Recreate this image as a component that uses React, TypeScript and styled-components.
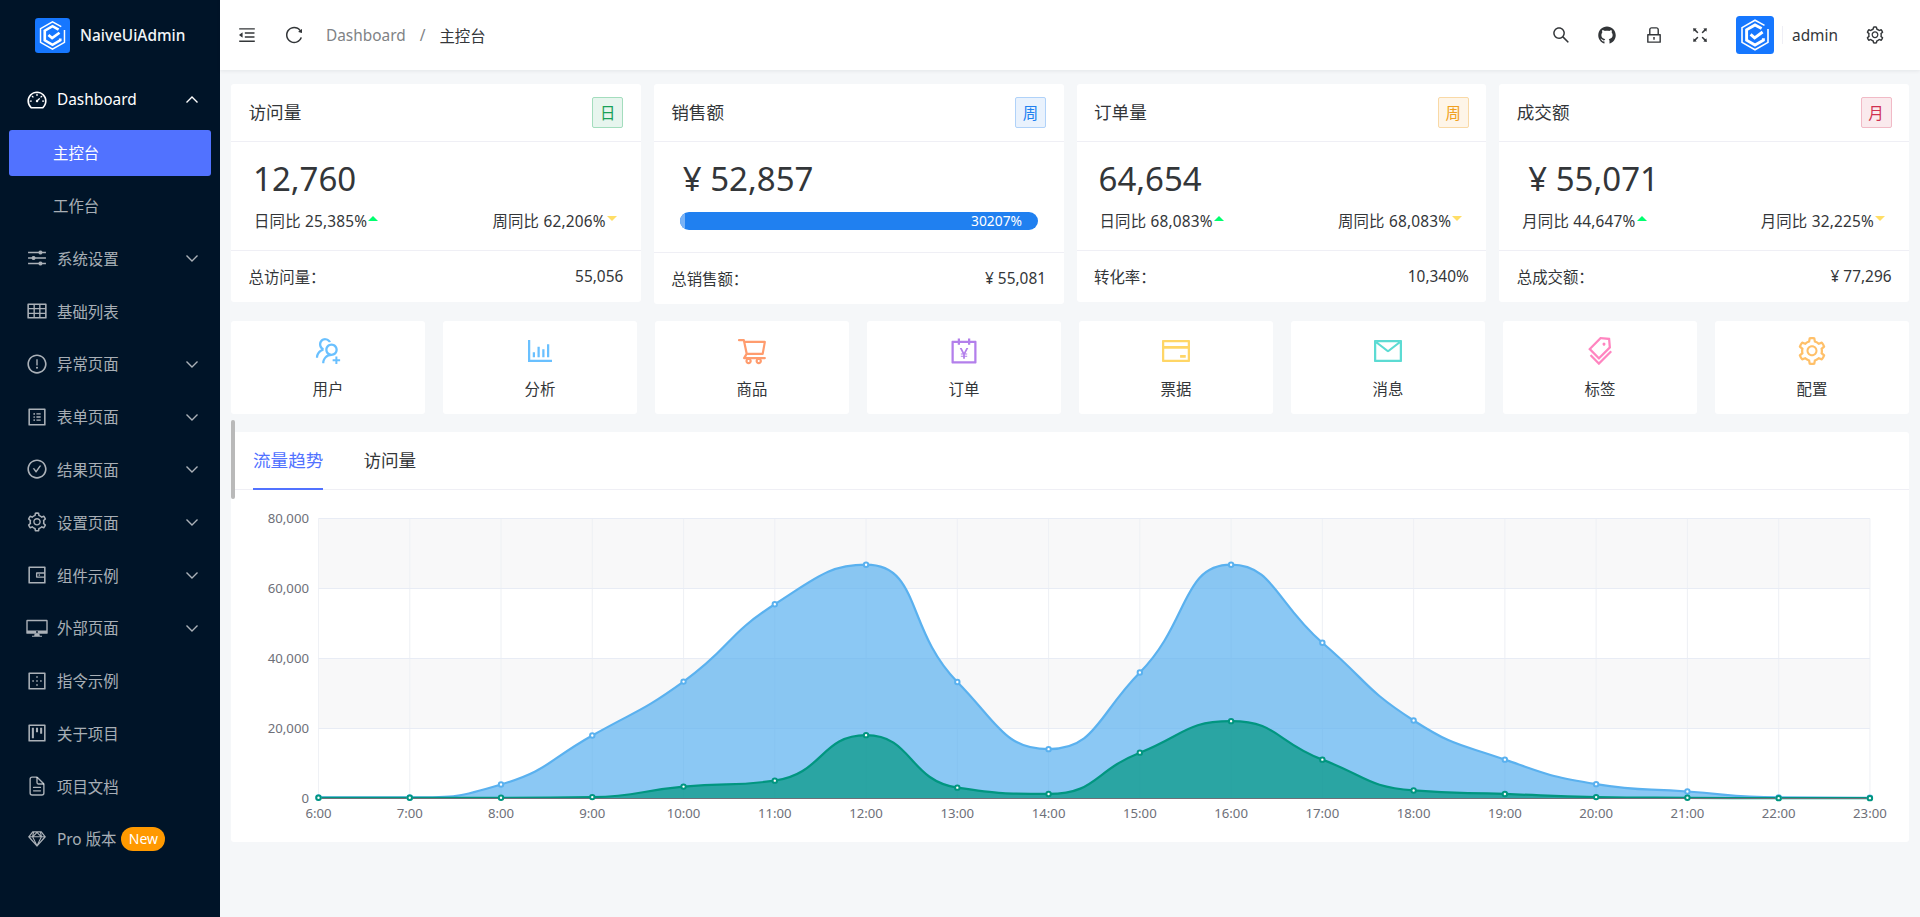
import React from 'react';
import styled, { createGlobalStyle } from 'styled-components';
import {
  AiOutlineDashboard, AiOutlineTable, AiOutlineExclamationCircle, AiOutlineProfile,
  AiOutlineCheckCircle, AiOutlineSetting, AiOutlineWallet, AiOutlineBorderOuter,
  AiOutlineProject, AiOutlineSketch, AiOutlineMenuFold, AiOutlineReload, AiOutlineSearch,
  AiOutlineGithub, AiOutlineLock, AiOutlineFullscreen, AiOutlineUsergroupAdd, AiOutlineBarChart,
  AiOutlineShoppingCart, AiOutlineAccountBook, AiOutlineCreditCard, AiOutlineMail, AiOutlineTags,
} from 'react-icons/ai';
import { IoOptionsSharp, IoDocumentTextOutline } from 'react-icons/io5';

const Global = createGlobalStyle`
  html, body { margin: 0; padding: 0; height: 100%; overflow: hidden; background: #f5f7f9; }
  * { box-sizing: border-box; }
  body { font-family: "Noto Sans", "Noto Sans CJK SC", sans-serif; color: #333639; }
`;

const Page = styled.div`display: flex; width: 1920px; height: 917px; overflow: hidden;`;

const Sidebar = styled.aside`width: 220px; flex: none; background: #001428; display: flex; flex-direction: column;`;
const Brand = styled.div`height: 70px; display: flex; align-items: center; padding-left: 35px; gap: 10px;`;
const BrandText = styled.span`color: #f2f4f7; font-size: 15.4px; font-weight: 500; white-space: nowrap;`;
const Nav = styled.nav`display: flex; flex-direction: column; gap: 6.6px; padding-top: 6.9px;`;
const NavRow = styled.div<{ $active?: boolean; $lit?: boolean; $sub?: boolean }>`
  height: 46.2px; margin: 0 9px; padding: 0 11px 0 ${p => (p.$sub ? 44 : 17)}px;
  display: flex; align-items: center; border-radius: 3px; font-size: 15.4px;
  color: ${p => (p.$active || p.$lit ? '#ffffff' : 'rgba(255,255,255,.67)')};
  background: ${p => (p.$active ? '#5172ff' : 'transparent')};
`;
const NavIcon = styled.span`width: 22px; height: 22px; font-size: 22px; display: flex; margin-right: 9px; flex: none;`;
const Chevron = styled.svg`margin-left: auto; width: 16px; height: 16px; flex: none;`;
const NewBadge = styled.span`
  margin-left: 5px; width: 44px; height: 24px; border-radius: 12px; background: #ff9900; color: #fff;
  font-size: 14px; display: flex; align-items: center; justify-content: center;
`;

const Main = styled.div`flex: 1; min-width: 0; display: flex; flex-direction: column; position: relative;`;
const Header = styled.header`
  height: 70px; flex: none; background: #fff; box-shadow: 0 1px 4px rgba(0,21,41,.08);
  display: flex; align-items: center; padding: 0 35px 0 17px; position: relative; z-index: 1;
`;
const HeaderIcon = styled.span<{ $color?: string }>`
  width: 20px; height: 20px; font-size: 20px; display: flex; flex: none; color: ${p => p.$color || '#333639'};
`;
const HeaderLeft = styled.div`display: flex; align-items: center; gap: 27px;`;
const Crumbs = styled.div`display: flex; align-items: center; margin-left: 22px; font-size: 15.4px;`;
const CrumbLink = styled.span`color: #808285;`;
const CrumbSep = styled.span`color: #808285; margin: 0 14px;`;
const CrumbNow = styled.span`color: #333639;`;
const HeaderRight = styled.div`margin-left: auto; display: flex; align-items: center;`;
const HeaderTools = styled.div`display: flex; align-items: center; gap: 26.4px;`;
const AvatarSvg = styled.svg`width: 38px; height: 38px; margin-left: 26px; flex: none;`;
const UserDivider = styled.span`width: 1px; height: 18px; background: #efeff5; margin: 0 9px 0 8px;`;
const UserName = styled.span`font-size: 15.4px; color: #333639; margin-right: 27px;`;

const Content = styled.main`flex: 1; padding: 14px 11px 0; display: flex; flex-direction: column;`;
const StatGrid = styled.section`display: grid; grid-template-columns: repeat(4, 1fr); gap: 13px; align-items: start;`;
const Card = styled.div`background: #fff; border-radius: 3px;`;
const CardHead = styled.div`
  height: 58px; padding: 0 17.5px; border-bottom: 1px solid #efeff5;
  display: flex; align-items: center; justify-content: space-between;
`;
const CardTitle = styled.span`font-size: 17.6px; color: #333639; padding-bottom: 2px;`;
const Tag = styled.span<{ $fg: string; $bg: string; $bd: string }>`
  width: 31px; height: 31px; border-radius: 2px; display: flex; align-items: center; justify-content: center;
  font-size: 15.4px; color: ${p => p.$fg}; background: ${p => p.$bg}; border: 1px solid ${p => p.$bd};
`;
const CardBody = styled.div<{ $tall?: boolean }>`
  height: ${p => (p.$tall ? 110 : 108)}px; padding: 15px 24px 0 23px;
`;
const BigValue = styled.div<{ $yen?: boolean }>`
  font-size: 33px; line-height: 44px; color: #333639; margin-left: ${p => (p.$yen ? 6 : -1)}px;
`;
const Compare = styled.div`
  margin-top: 8px; height: 22px; display: flex; align-items: center; justify-content: space-between;
  font-size: 15.4px; color: #333639; letter-spacing: .2px;
`;
const CompareItem = styled.span`display: flex; align-items: center; gap: 1px;`;
const Arrow = styled.i<{ $up?: boolean }>`
  width: 0; height: 0; border-left: 5px solid transparent; border-right: 5px solid transparent;
  ${p => (p.$up ? 'border-bottom: 5px solid #00ff6f;' : 'border-top: 5px solid #ffde66;')}
  margin-top: -4px;
`;
const Progress = styled.div`
  margin: 11px 2px 0 3px; height: 18px; border-radius: 9px; background: #2080f0; position: relative; overflow: hidden;
  color: #fff; font-size: 13.8px; line-height: 18px; text-align: right; padding-right: 15.5px;
`;
const ProgressCap = styled.i`position: absolute; left: 0; top: 0; bottom: 0; width: 5px; background: #79b2f5;`;
const CardFoot = styled.div`
  height: 52px; padding: 0 17.5px; border-top: 1px solid #efeff5;
  display: flex; align-items: center; justify-content: space-between; font-size: 15.4px; color: #333639;
`;

const ShortcutGrid = styled.section`display: grid; grid-template-columns: repeat(8, 1fr); gap: 18px; margin-top: 17px;`;
const Shortcut = styled.div`
  height: 93px; background: #fff; border-radius: 3px; display: flex; flex-direction: column; align-items: center;
  padding-top: 14px; font-size: 15.4px; color: #333639;
`;
const ShortcutIcon = styled.span<{ $color: string }>`
  width: 32px; height: 32px; font-size: 32px; display: flex; color: ${p => p.$color}; margin-bottom: 10px;
`;

const ChartCard = styled(Card)`margin-top: 18px; height: 410px; display: flex; flex-direction: column;`;
const Tabs = styled.div`
  height: 58px; flex: none; display: flex; gap: 40px; padding-left: 22px; border-bottom: 1px solid #efeff5;
`;
const TabItem = styled.div<{ $on?: boolean }>`
  height: 58px; display: flex; align-items: center; font-size: 17.6px; padding-bottom: 1px;
  color: ${p => (p.$on ? '#5172ff' : '#333639')};
  border-bottom: 2px solid ${p => (p.$on ? '#5172ff' : 'transparent')};
`;
const ScrollThumb = styled.i`
  position: absolute; left: 11px; top: 420px; width: 4px; height: 79px; border-radius: 2px; background: #b9b9b9; z-index: 2;
`;
const ChartSvg = styled.svg`display: block; width: 100%; flex: 1; min-height: 0; font-family: "Noto Sans", sans-serif;`;

const Logo = () => (
  <>
    <rect width="38" height="38" rx="3.5" fill="#1677ff" />
    <path d="M28.5 9.4 19 4.2 6 11.6v14.8l13 7.4 13-7.4V13" fill="none" stroke="#fff" strokeWidth="1.6" />
    <path d="M25.6 12.6 19 8.9 10.6 13.8v10.4l8.4 4.9 8.4-4.9v-2" fill="none" stroke="#fff" strokeWidth="2.9" />
    <path d="M14.6 18.4l4 3.4 8-5.8" fill="none" stroke="#fff" strokeWidth="2.9" />
  </>
);

const DesktopGlyph = () => (
  <svg width="22" height="22" viewBox="0 0 22 22" fill="currentColor">
    <path fillRule="evenodd" d="M1.2 2.8h19.6c.5 0 .9.4.9.9v12.2c0 .5-.4.9-.9.9H1.2a.9.9 0 0 1-.9-.9V3.7c0-.5.4-.9.9-.9Zm.5 1.4v9.2h18.6V4.2Z" />
    <circle cx="11" cy="15" r=".9" fill="#001428" />
    <path d="M8.6 16.8h4.8l.4 2H16v1H6v-1h2.2Z" />
  </svg>
);

const Down = ({ up }: { up?: boolean }) => (
  <Chevron viewBox="0 0 16 16">
    <path d={up ? 'M2.5 10.5 8 5l5.5 5.5' : 'M2.5 5.5 8 11l5.5-5.5'} fill="none" stroke="currentColor" strokeWidth="1.4" />
  </Chevron>
);

const menu = [
  { t: 'Dashboard', i: <AiOutlineDashboard />, lit: true, open: true },
  { t: '主控台', sub: true, active: true },
  { t: '工作台', sub: true },
  { t: '系统设置', i: <IoOptionsSharp />, arrow: true },
  { t: '基础列表', i: <AiOutlineTable /> },
  { t: '异常页面', i: <AiOutlineExclamationCircle />, arrow: true },
  { t: '表单页面', i: <AiOutlineProfile />, arrow: true },
  { t: '结果页面', i: <AiOutlineCheckCircle />, arrow: true },
  { t: '设置页面', i: <AiOutlineSetting />, arrow: true },
  { t: '组件示例', i: <AiOutlineWallet />, arrow: true },
  { t: '外部页面', i: <DesktopGlyph />, arrow: true },
  { t: '指令示例', i: <AiOutlineBorderOuter /> },
  { t: '关于项目', i: <AiOutlineProject /> },
  { t: '项目文档', i: <IoDocumentTextOutline /> },
  { t: 'Pro 版本', i: <AiOutlineSketch />, badge: true },
];

const tagTones = {
  green: { $fg: '#18a058', $bg: '#e7f5ee', $bd: '#a3ddbd' },
  blue: { $fg: '#2080f0', $bg: '#e9f2fd', $bd: '#b0d2f9' },
  orange: { $fg: '#f0a020', $bg: '#fef5e8', $bd: '#f9d9a6' },
  red: { $fg: '#d03050', $bg: '#faeaed', $bd: '#f1bac6' },
};

const stats = [
  { title: '访问量', tag: '日', tone: tagTones.green, value: '12,760', l: '日同比 25,385%', r: '周同比 62,206%', fl: '总访问量：', fr: '55,056' },
  { title: '销售额', tag: '周', tone: tagTones.blue, value: '¥ 52,857', yen: true, bar: '30207%', fl: '总销售额：', fr: '¥ 55,081' },
  { title: '订单量', tag: '周', tone: tagTones.orange, value: '64,654', l: '日同比 68,083%', r: '周同比 68,083%', fl: '转化率：', fr: '10,340%' },
  { title: '成交额', tag: '月', tone: tagTones.red, value: '¥ 55,071', yen: true, l: '月同比 44,647%', r: '月同比 32,225%', fl: '总成交额：', fr: '¥ 77,296' },
];

const shortcuts = [
  { t: '用户', c: '#69c0ff', i: <AiOutlineUsergroupAdd /> },
  { t: '分析', c: '#69c0ff', i: <AiOutlineBarChart /> },
  { t: '商品', c: '#ff9c6e', i: <AiOutlineShoppingCart /> },
  { t: '订单', c: '#b37feb', i: <AiOutlineAccountBook /> },
  { t: '票据', c: '#ffd666', i: <AiOutlineCreditCard /> },
  { t: '消息', c: '#5cdbd3', i: <AiOutlineMail /> },
  { t: '标签', c: '#ff85c0', i: <AiOutlineTags /> },
  { t: '配置', c: '#ffc069', i: <AiOutlineSetting /> },
];

/* Chart geometry in page coordinates */
const X0 = 318.5, XSTEP = 91.26, Y0 = 798.5, YTOP = 518.5;
const xAt = (i: number) => X0 + i * XSTEP;
const yAt = (v: number) => Y0 - (v / 80000) * (Y0 - YTOP);
const blue = [300, 300, 4000, 18000, 33400, 55500, 66800, 33300, 14100, 36000, 66800, 44500, 22300, 11100, 4100, 2000, 300, 200];
const green = [200, 200, 200, 400, 3400, 5100, 18100, 3100, 1300, 13100, 22100, 11100, 2300, 1300, 400, 200, 100, 100];

const clamp = (v: number, a: number, b: number) => Math.max(Math.min(v, Math.max(a, b)), Math.min(a, b));

// the smoothing of the chart library: control points follow the neighbour chord, clamped to each segment
const smoothPath = (values: number[], smooth = 0.5) => {
  const pts = values.map((v, i) => [xAt(i), yAt(v)]);
  let d = `M${pts[0][0]} ${pts[0][1]}`;
  let cp = [...pts[0]];
  pts.forEach((p, i) => {
    if (i === 0) return;
    const prev = pts[i - 1];
    const next = pts[i + 1];
    let before = p;
    let after = p;
    if (next) {
      const l0 = Math.hypot(p[0] - prev[0], p[1] - prev[1]);
      const l1 = Math.hypot(next[0] - p[0], next[1] - p[1]);
      const r = l1 / (l0 + l1);
      let nx = clamp(p[0] + (next[0] - prev[0]) * smooth * r, next[0], p[0]);
      let ny = clamp(p[1] + (next[1] - prev[1]) * smooth * r, next[1], p[1]);
      const bx = clamp(p[0] - ((nx - p[0]) * l0) / l1, prev[0], p[0]);
      const by = clamp(p[1] - ((ny - p[1]) * l0) / l1, prev[1], p[1]);
      nx = p[0] + ((p[0] - bx) * l1) / l0;
      ny = p[1] + ((p[1] - by) * l1) / l0;
      before = [bx, by];
      after = [nx, ny];
    }
    d += `C${cp[0]} ${cp[1]} ${before[0]} ${before[1]} ${p[0]} ${p[1]}`;
    cp = after;
  });
  return d;
};

const Series = ({ values, color }: { values: number[]; color: string }) => {
  const line = smoothPath(values);
  return (
    <>
      <path d={`${line}L${xAt(values.length - 1)} ${Y0}L${X0} ${Y0}Z`} fill={color} fillOpacity={0.7} />
      <path d={line} fill="none" stroke={color} strokeWidth={2.2} />
    </>
  );
};
const Dots = ({ values, color }: { values: number[]; color: string }) => (
  <>
    {values.map((v, i) => (
      <circle key={i} cx={xAt(i)} cy={yAt(v)} r={2.2} fill="#fff" stroke={color} strokeWidth={2} />
    ))}
  </>
);

const Chart = () => {
  const hours = Array.from({ length: 18 }, (_, i) => i);
  const ticks = [0, 20000, 40000, 60000, 80000];
  return (
    <ChartSvg viewBox="231 490 1678 352" preserveAspectRatio="none">
      <rect x={X0} y={yAt(80000)} width={XSTEP * 17} height={70} fill="#f8f8f9" />
      <rect x={X0} y={yAt(40000)} width={XSTEP * 17} height={70} fill="#f8f8f9" />
      {hours.map(i => (
        <line key={i} x1={xAt(i)} x2={xAt(i)} y1={YTOP} y2={Y0} stroke="#eff1f5" strokeWidth={1.1} />
      ))}
      {ticks.slice(1).map(v => (
        <line key={v} x1={X0} x2={xAt(17)} y1={yAt(v)} y2={yAt(v)} stroke="#e8ecf5" strokeWidth={1.1} />
      ))}
      <Series values={blue} color="#5ab1ef" />
      <Series values={green} color="#019680" />
      <line x1={X0} x2={xAt(17)} y1={Y0} y2={Y0} stroke="#6e7079" strokeWidth={1.1} />
      <Dots values={blue} color="#5ab1ef" />
      <Dots values={green} color="#019680" />
      {ticks.map(v => (
        <text key={v} x={309} y={yAt(v) + 4.6} textAnchor="end" fontSize={13.2} fill="#6e7079">
          {v.toLocaleString('en-US')}
        </text>
      ))}
      {hours.map(i => (
        <text key={i} x={xAt(i)} y={818} textAnchor="middle" fontSize={13.2} fill="#6e7079">
          {`${i + 6}:00`}
        </text>
      ))}
    </ChartSvg>
  );
};

export default function App() {
  return (
    <Page>
      <Global />
      <Sidebar>
        <Brand>
          <svg width="35" height="35" viewBox="0 0 38 38"><Logo /></svg>
          <BrandText>NaiveUiAdmin</BrandText>
        </Brand>
        <Nav>
          {menu.map(m => (
            <NavRow key={m.t} $active={m.active} $lit={m.lit} $sub={m.sub}>
              {m.i && <NavIcon>{m.i}</NavIcon>}
              <span>{m.t}</span>
              {m.badge && <NewBadge>New</NewBadge>}
              {m.arrow && <Down />}
              {m.open && <Down up />}
            </NavRow>
          ))}
        </Nav>
      </Sidebar>
      <Main>
        <Header>
          <HeaderLeft>
            <HeaderIcon><AiOutlineMenuFold /></HeaderIcon>
            <HeaderIcon><AiOutlineReload /></HeaderIcon>
          </HeaderLeft>
          <Crumbs>
            <CrumbLink>Dashboard</CrumbLink>
            <CrumbSep>/</CrumbSep>
            <CrumbNow>主控台</CrumbNow>
          </Crumbs>
          <HeaderRight>
            <HeaderTools>
              <HeaderIcon><AiOutlineSearch /></HeaderIcon>
              <HeaderIcon><AiOutlineGithub /></HeaderIcon>
              <HeaderIcon><AiOutlineLock /></HeaderIcon>
              <HeaderIcon><AiOutlineFullscreen /></HeaderIcon>
            </HeaderTools>
            <AvatarSvg viewBox="0 0 38 38"><Logo /></AvatarSvg>
            <UserDivider />
            <UserName>admin</UserName>
            <HeaderIcon><AiOutlineSetting /></HeaderIcon>
          </HeaderRight>
        </Header>
        <ScrollThumb />
        <Content>
          <StatGrid>
            {stats.map(s => (
              <Card key={s.title}>
                <CardHead>
                  <CardTitle>{s.title}</CardTitle>
                  <Tag {...s.tone}>{s.tag}</Tag>
                </CardHead>
                <CardBody $tall={!!s.bar}>
                  <BigValue $yen={s.yen}>{s.value}</BigValue>
                  {s.bar ? (
                    <Progress><ProgressCap />{s.bar}</Progress>
                  ) : (
                    <Compare>
                      <CompareItem>{s.l}<Arrow $up /></CompareItem>
                      <CompareItem>{s.r}<Arrow /></CompareItem>
                    </Compare>
                  )}
                </CardBody>
                <CardFoot><span>{s.fl}</span><span>{s.fr}</span></CardFoot>
              </Card>
            ))}
          </StatGrid>
          <ShortcutGrid>
            {shortcuts.map(s => (
              <Shortcut key={s.t}>
                <ShortcutIcon $color={s.c}>{s.i}</ShortcutIcon>
                {s.t}
              </Shortcut>
            ))}
          </ShortcutGrid>
          <ChartCard>
            <Tabs>
              <TabItem $on>流量趋势</TabItem>
              <TabItem>访问量</TabItem>
            </Tabs>
            <Chart />
          </ChartCard>
        </Content>
      </Main>
    </Page>
  );
}
